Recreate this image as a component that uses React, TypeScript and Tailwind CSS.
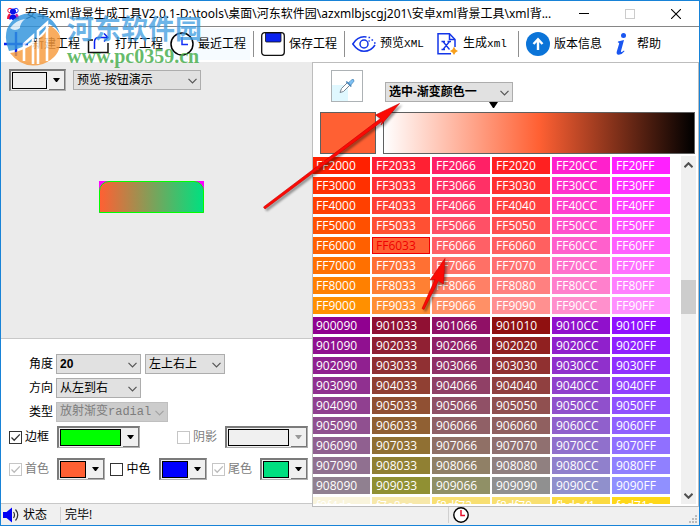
import { useState } from 'react';
import type { ReactNode } from 'react';

const STEPS = ['20', '30', '40', '50', '60', '70', '80', '90'];

const reds = STEPS.map(n => [`FF${n}00`, `FF${n}33`, `FF${n}66`, `FF${n}${n}`, `FF${n}CC`, `FF${n}FF`]);

const purples = ['10', ...STEPS].map((n, i) => [
  `90${i}090`, `90${n}33`, `90${n}66`, `90${n}${n}`, `90${n}CC`, `90${n}FF`,
]);

const yellows = [['f9f4dc', 'f7e8aa', 'f8df72', 'f8df70', 'fbda41', 'fed71a']];

const PALETTE = [...reds, ...purples, ...yellows].flat();

function Chevron({ className = '' }: { className?: string }) {
  return (
    <svg className={className} width="9" height="6" viewBox="0 0 9 6" fill="none" stroke="currentColor" strokeWidth="1.2">
      <path d="M0.5 0.8 L4.5 4.8 L8.5 0.8" />
    </svg>
  );
}

function Combo({ label, options, className = '', disabled = false }: {
  label: string;
  options: string[];
  className?: string;
  disabled?: boolean;
}) {
  return (
    <span className={`relative inline-flex h-5 ${className}`}>
      <select
        aria-label={label}
        disabled={disabled}
        className="h-5 w-full appearance-none border border-[#adadad] bg-[#e1e1e1] pl-[3px] pr-4 leading-4 outline-none disabled:border-[#bfbfbf] disabled:bg-[#cccccc] disabled:text-[#7d7d7d] disabled:opacity-100"
      >
        {options.map(o => <option key={o}>{o}</option>)}
      </select>
      <Chevron className={`pointer-events-none absolute right-1 top-2 ${disabled ? 'text-[#a3a3a3]' : 'text-[#555]'}`} />
    </span>
  );
}

// sunken colour box with a raised drop button
function ColorPicker({ label, color, className = 'w-12', disabled = false }: {
  label: string;
  color: string;
  className?: string;
  disabled?: boolean;
}) {
  return (
    <button
      type="button"
      aria-label={label}
      disabled={disabled}
      className={`flex h-[22px] border-2 border-b border-r border-[#7b7b7b] border-b-[#b0b0b0] border-r-[#b0b0b0] bg-[#f0f0f0] ${className}`}
    >
      <span className="m-px flex-1 self-stretch border border-black" style={{ backgroundColor: color }} />
      <span className="ml-px flex w-4 items-center justify-center self-stretch border-b border-r border-[#777] bg-[#f0f0f0]">
        <svg width="7" height="4" viewBox="0 0 7 4" fill={disabled ? '#999' : '#000'}>
          <path d="M0 0 H7 L4 4 H3 Z" />
        </svg>
      </span>
    </button>
  );
}

function CheckField({ label, checked, disabled = false, children }: {
  label: string;
  checked: boolean;
  disabled?: boolean;
  children: ReactNode;
}) {
  const [on, setOn] = useState(checked);
  return (
    <div className="flex items-center gap-2">
      <label className={`flex items-center gap-[3px] ${disabled ? 'text-[#7d7d7d]' : 'text-black'}`}>
        <span className="relative flex">
          <input
            type="checkbox"
            checked={on}
            disabled={disabled}
            onChange={e => setOn(e.target.checked)}
            className="h-[13px] w-[13px] appearance-none border border-[#333] bg-white disabled:border-[#c6c6c6]"
          />
          {on && (
            <svg className="pointer-events-none absolute inset-0" width="13" height="13" viewBox="0 0 13 13" fill="none" stroke={disabled ? '#bbb' : '#333'} strokeWidth="1.3">
              <path d="M2.5 6.5 L5.2 9.2 L10.8 3.4" />
            </svg>
          )}
        </span>
        {label}
      </label>
      {children}
    </div>
  );
}

function ToolButton({ icon, active = false, children }: { icon: ReactNode; active?: boolean; children: ReactNode }) {
  return (
    <button type="button" className={`flex shrink-0 items-center gap-1 whitespace-nowrap ${active ? 'bg-[#f6fbff] ring-4 ring-[#f6fbff]' : ''}`}>
      {icon}
      <span className="min-w-12 text-left">{children}</span>
    </button>
  );
}

function Divider() {
  return <span className="h-[26px] w-px shrink-0 bg-[#8f8f8f]" />;
}

function Mono({ children }: { children: ReactNode }) {
  return <span className="font-['Liberation_Mono',monospace] text-[11px]">{children}</span>;
}

const svg24 = { width: 24, height: 24, viewBox: '0 0 24 24', fill: 'none' };

function PlusIcon() {
  return (
    <svg {...svg24} stroke="#0a22f0" strokeWidth="2.4">
      <path d="M12 0 V24 M0 12 H24" />
    </svg>
  );
}

function OpenIcon() {
  return (
    <svg {...svg24}>
      <path d="M6 8 H1.5 V20.5 H21 V11" stroke="#111" strokeWidth="1.5" />
      <path d="M7.5 17 V10 Q7.5 5.5 12 5.5 H21" stroke="#0a22f0" strokeWidth="1.5" />
      <path d="M17 1.5 L21 5.5 L17 9.5" stroke="#0a22f0" strokeWidth="1.5" />
    </svg>
  );
}

function ClockIcon() {
  return (
    <svg {...svg24}>
      <circle cx="12" cy="12" r="11" fill="#fff" stroke="#000" strokeWidth="1.5" />
      <path d="M12 5 V12.5 H18" stroke="#1530f5" strokeWidth="1.5" />
    </svg>
  );
}

function SaveIcon() {
  return (
    <svg {...svg24}>
      <rect x="0.7" y="0.7" width="22.6" height="22.6" rx="3" fill="#fff" stroke="#111" strokeWidth="1.3" />
      <path d="M4.5 1 H20 V9 Q20 10 19 10 H5.5 Q4.5 10 4.5 9 Z" fill="#0a22f0" stroke="#111" strokeWidth="0.8" />
    </svg>
  );
}

function EyeIcon() {
  return (
    <svg {...svg24} stroke="#1436e8" strokeWidth="1.5">
      <path d="M14.5 5 Q6 3.5 0.8 12 Q6 19.3 12 19.3 Q19 19.3 23 13" />
      <circle cx="12" cy="12" r="4" />
      <path d="M16.5 5.5 h1.6 M19.5 8 h1.6 M16.5 9 h1.2 M22 11 h1.6" strokeWidth="1.6" />
    </svg>
  );
}

function XmlIcon() {
  return (
    <svg {...svg24} stroke="#1436e8" strokeWidth="1.5">
      <path d="M16 21.8 H3 V1.8 H14.5 L20 7.5 V15" />
      <path d="M14.5 2 V7.5 H20" />
      <path d="M8 9.5 L14.5 17.5 M14.5 9.5 L8 17.5 M6.5 9.5 H10 M12.5 9.5 H16 M6.5 17.5 H10" strokeWidth="1.3" />
      <path d="M19 14.5 L20.5 17.5 L23 19 L20.5 20.5 L19 23 L17.5 20.5 L15 19 L17.5 17.5 Z" fill="#f7a01d" stroke="none" />
    </svg>
  );
}

function VersionIcon() {
  return (
    <svg {...svg24}>
      <circle cx="12" cy="12" r="12" fill="#0b74d8" />
      <path d="M12 18 V7.5 M7.5 12 L12 7.2 L16.5 12" stroke="#fff" strokeWidth="2.4" />
    </svg>
  );
}

function HelpIcon() {
  return (
    <svg {...svg24} fill="#1a56f0">
      <circle cx="14.5" cy="3.5" r="2.5" />
      <path d="M9 9.5 Q12 8.8 15 8 L12 19 Q11.8 20.5 13.2 19.8 L15 18.5 L15.5 19.2 Q12.5 23 9.5 22.8 Q7 22.3 7.8 19.5 L10.2 11.5 Q10.3 10.5 8.8 10.5 Z" />
    </svg>
  );
}

function AppIcon() {
  return (
    <svg width="14" height="14" viewBox="0 0 14 14">
      <circle cx="4" cy="3.5" r="2.2" fill="#fff" stroke="#f01840" />
      <circle cx="10" cy="3.5" r="2.2" fill="#fff" stroke="#2244ff" />
      <path d="M1 12 Q1 7 4 6.5 L6 12 Z" fill="#f01840" />
      <path d="M13 12 Q13 7 10 6.5 L8 12 Z" fill="#d020a0" />
      <circle cx="7" cy="4.5" r="3" fill="#0a10e8" />
      <path d="M3.5 13 Q3 7.5 7 7.5 Q11 7.5 10.5 13 L8.5 12 L7 13.5 L5.5 12 Z" fill="#0a10e8" />
    </svg>
  );
}

function TitleBar() {
  return (
    <header className="flex h-[26px] shrink-0 items-center border-b border-[#868686] bg-white pl-[5px]">
      <AppIcon />
      <h1 className="ml-[5px] flex-1 overflow-hidden whitespace-nowrap font-['Noto_Sans','Noto_Sans_CJK_SC',sans-serif] text-xs font-normal">
        安卓xml背景生成工具V2.0.1-D:\tools\桌面\河东软件园\azxmlbjscgj201\安卓xml背景工具\xml背...
      </h1>
      <button type="button" aria-label="最小化" className="flex h-full w-[46px] items-center justify-center">
        <span className="h-px w-[10px] bg-black" />
      </button>
      <button type="button" aria-label="最大化" disabled className="flex h-full w-[46px] items-center justify-center">
        <span className="h-[10px] w-[10px] border border-[#ccc]" />
      </button>
      <button type="button" aria-label="关闭" className="flex h-full w-[46px] items-center justify-center">
        <svg width="10" height="10" viewBox="0 0 10 10" stroke="#000" strokeWidth="1.1">
          <path d="M0 0 L10 10 M10 0 L0 10" />
        </svg>
      </button>
    </header>
  );
}

function Toolbar() {
  return (
    <nav className="flex h-[35px] shrink-0 items-center gap-[7px] overflow-hidden bg-white pb-[2px] pl-[3px]">
      <ToolButton icon={<PlusIcon />}>新建工程</ToolButton>
      <ToolButton icon={<OpenIcon />}>打开工程</ToolButton>
      <ToolButton icon={<ClockIcon />} active>最近工程</ToolButton>
      <Divider />
      <ToolButton icon={<SaveIcon />}>保存工程</ToolButton>
      <Divider />
      <ToolButton icon={<EyeIcon />}>预览<Mono>XML</Mono></ToolButton>
      <ToolButton icon={<XmlIcon />}>生成<Mono>xml</Mono></ToolButton>
      <Divider />
      <ToolButton icon={<VersionIcon />}>版本信息</ToolButton>
      <ToolButton icon={<HelpIcon />}>帮助</ToolButton>
    </nav>
  );
}

function Preview() {
  return (
    <section className="flex-1 bg-[#ebebeb] px-2 pt-[7px]">
      <div className="flex items-center gap-[7px]">
        <ColorPicker label="背景颜色" color="#f0f0f0" className="w-[57px]" />
        <Combo label="预览" options={['预览-按钮演示']} className="w-32" />
      </div>
      <div className="ml-[90px] mt-[90px] h-8 w-[105px] bg-[#ff00ff]">
        <div className="h-full rounded-t-[10px] border border-[#00ff00] bg-linear-to-r/srgb from-[#ff6033] to-[#00e080]" />
      </div>
    </section>
  );
}

function Settings() {
  return (
    <section className="mb-[3px] flex flex-col gap-1 border-y border-[#c8c8c8] bg-white pb-[23px] pl-2 pr-1 pt-[15px]">
      <div className="flex items-center gap-[3px] pl-5">
        <span>角度</span>
        <div className="flex gap-1">
          <Combo label="角度" options={['20']} className="w-[85px] font-['Liberation_Sans',sans-serif] font-bold" />
          <Combo label="起点" options={['左上右上']} className="w-20" />
        </div>
      </div>
      <div className="flex items-center gap-[3px] pl-5">
        <span>方向</span>
        <Combo label="方向" options={['从左到右']} className="w-[85px]" />
      </div>
      <div className="flex items-center gap-[3px] pl-5">
        <span>类型</span>
        <Combo label="类型" options={['放射渐变radial']} className="w-28 font-['Liberation_Mono','Noto_Sans_CJK_SC',monospace]" disabled />
      </div>
      <div className="flex items-center justify-between">
        <CheckField label="边框" checked>
          <ColorPicker label="边框颜色" color="#00ff00" className="w-[83px]" />
        </CheckField>
        <CheckField label="阴影" checked={false} disabled>
          <ColorPicker label="阴影颜色" color="#f0f0f0" className="w-[83px]" disabled />
        </CheckField>
      </div>
      <div className="mt-[6px] flex items-center justify-between">
        <CheckField label="首色" checked disabled>
          <ColorPicker label="首色颜色" color="#ff6033" />
        </CheckField>
        <CheckField label="中色" checked={false}>
          <ColorPicker label="中色颜色" color="#0000ff" />
        </CheckField>
        <CheckField label="尾色" checked disabled>
          <ColorPicker label="尾色颜色" color="#00e080" />
        </CheckField>
      </div>
    </section>
  );
}

function Palette() {
  const [picked, setPicked] = useState('FF6033');

  return (
    <section className="flex min-w-0 flex-1 flex-col border border-[#bdbdbd] bg-white pb-[2px]">
      <div className="flex items-end gap-[22px] pl-[18px] pt-[7px]">
        <button type="button" aria-label="取色" className="relative flex h-8 w-8 items-center justify-center border border-[#adb2b5] bg-white">
          <span className="absolute bottom-0 left-0 h-4 w-4 bg-[#e0f8ff]" />
          <svg className="relative" width="16" height="16" viewBox="0 0 16 16">
            <path d="M8.5 4.5 L2.5 10.5 L1 14.5 L4.5 13.5 L11 7" fill="#fff" stroke="#7a8794" />
            <path d="M9 5 L11 3.5 Q13 0.5 14.5 1.5 Q16 3 13.5 5 L11.5 7.5 Z" fill="#7cc0f4" stroke="#4b86b8" strokeWidth="0.7" />
            <path d="M7.3 3.5 L12.3 8.5" stroke="#4b86b8" strokeWidth="1.6" />
          </svg>
        </button>
        <Combo label="选中颜色" options={['选中-渐变颜色一']} className="w-32 font-bold" />
      </div>

      <div className="mt-[10px] flex h-[42px] shrink-0 gap-[7px] pl-[7px] pr-[3px]">
        <div className="w-14 border border-[#5f5f5f] bg-[#ff6033]" />
        <div className="relative flex-1 border border-[#5f5f5f] bg-linear-to-r/srgb from-white via-[#ff6033] to-black">
          <svg className="absolute -top-[11px] left-[34%]" width="9" height="6" viewBox="0 0 9 6">
            <path d="M0 0 H9 L5 6 H4 Z" />
          </svg>
        </div>
      </div>

      <div className="mt-[2px] flex min-h-0 flex-1 pr-[2px]">
        <div className="min-w-0 flex-1 overflow-hidden pt-px">
          <div className="-ml-px grid grid-cols-6 gap-x-[2px] gap-y-[3px] pr-[11px]">
            {PALETTE.map(hex => (
              <button
                key={hex}
                type="button"
                onClick={() => setPicked(hex)}
                className={`h-[17px] border pl-[3px] text-left text-xs leading-[15px] ${picked === hex ? 'border-[#f00000] text-[#f00000]' : 'border-transparent text-white'}`}
                style={{ background: `#${hex} border-box` }}
              >
                {hex}
              </button>
            ))}
          </div>
        </div>
        <div className="flex w-[15px] flex-col bg-[#f0f0f0] text-[#505050]">
          <button type="button" aria-label="向上" className="flex h-[17px] items-center justify-center">
            <Chevron className="rotate-180 stroke-2" />
          </button>
          <span className="flex-[107]" />
          <span className="h-[34px] bg-[#cdcdcd]" />
          <span className="flex-[173]" />
          <button type="button" aria-label="向下" className="flex h-[17px] items-center justify-center">
            <Chevron className="stroke-2" />
          </button>
        </div>
      </div>
    </section>
  );
}

function StatusBar() {
  return (
    <footer className="flex h-[18px] shrink-0 items-center bg-[#f0f0f0] pb-[2px] pl-[2px]">
      <svg width="16" height="16" viewBox="0 0 16 16" fill="none">
        <path d="M0 5 H3.5 L9 0.5 V15.5 L3.5 11 H0 Z" fill="#0000f5" />
        <path d="M10.5 5 Q12.5 8 10.5 11 M12.5 2.5 Q17 8 12.5 13.5" stroke="#333" strokeWidth="1.2" />
      </svg>
      <span className="ml-1 w-[37px]">状态</span>
      <span className="h-4 w-px bg-[#d0d0d0]" />
      <span className="ml-1 w-[383px]">完毕!</span>
      <span className="h-4 w-px bg-[#d0d0d0]" />
      <svg className="ml-1" width="16" height="16" viewBox="0 0 16 16" fill="none">
        <circle cx="8" cy="8" r="7.2" fill="#fff" stroke="#000" strokeWidth="1.4" />
        <path d="M8 3 V8.5 H12" stroke="#e8102c" strokeWidth="1.5" />
      </svg>
      <svg className="ml-auto mr-[2px] self-end" width="8" height="8" viewBox="0 0 8 8" fill="#bcbcbc">
        <path d="M6 0h2v2h-2z M3 3h2v2h-2z M6 3h2v2h-2z M0 6h2v2h-2z M3 6h2v2h-2z M6 6h2v2h-2z" />
      </svg>
    </footer>
  );
}

function Watermark() {
  return (
    <div className="pointer-events-none absolute left-1 top-[11px] flex items-start gap-[6px]">
      <svg width="56" height="55" viewBox="0 0 56 55" fill="none" opacity="0.82">
        <path d="M2 17 Q9 1 28 1 Q48 1 55 22 Q50 14 44 12 Q38 22 29 28 Q17 37 4 39 Q-1 28 2 17 Z" fill="#2f93dc" />
        <path d="M5 41 Q20 39 32 29 Q40 22 45 14 Q52 17 55 24 Q58 44 38 52 Q18 58 5 41 Z" fill="#f79a3c" />
        <path d="M19 49 V32 L28 24 V52 M33 52 V19 L42 11 V49" stroke="#fff" strokeWidth="2.6" />
        <path d="M5 16 Q11 8 20 7 Q15 11 15 16 Q10 20 5 16 Z" fill="#fff" opacity="0.8" />
      </svg>
      <div className="flex flex-col whitespace-nowrap">
        <span className="text-[27px] font-bold leading-[34px] text-[#3d9be0]/75">河东软件园</span>
        <span className="font-['Liberation_Serif',serif] text-xl font-bold leading-5 text-[#4caf50]/85">www.pc0359.cn</span>
      </div>
    </div>
  );
}

// red annotation arrows drawn over the window
function Arrows() {
  return (
    <svg className="pointer-events-none absolute left-0 top-0 drop-shadow-[2px_2px_1px_rgba(0,0,0,0.4)]" width="700" height="526" viewBox="0 0 700 526" fill="#fb0a05" stroke="#c80000" strokeWidth="0.6">
      <path d="M398.5 102.5 L374.5 114 L379.5 117.5 L262.5 206 L264 208 L381.5 120 L380 124 Z" />
      <path d="M444 257.5 L429 279 L434 278.5 L421 307.5 L423 308.5 L437.5 280 L442.5 283 Z" />
    </svg>
  );
}

export default function App() {
  return (
    <div className="relative flex h-screen flex-col overflow-hidden border border-[#1883d7] bg-[#f0f0f0] font-['Open_Sans','Noto_Sans_CJK_SC',sans-serif] text-xs text-black">
      <TitleBar />
      <Toolbar />
      <main className="flex min-h-0 flex-1">
        <div className="flex w-[311px] shrink-0 flex-col">
          <Preview />
          <Settings />
        </div>
        <Palette />
      </main>
      <StatusBar />
      <Watermark />
      <Arrows />
    </div>
  );
}
